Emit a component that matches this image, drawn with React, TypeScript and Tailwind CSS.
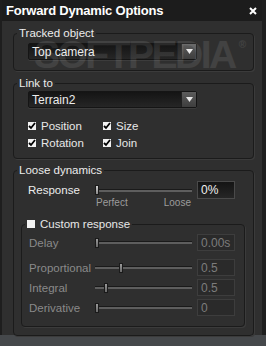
import React from "react";

const font = { fontFamily: '"Liberation Sans", Arial, sans-serif' };

function Dropdown({ value }: { value: string }) {
  return (
    <div className="flex h-[17px] w-[169px] items-stretch rounded-[2px] border border-[#151515] bg-gradient-to-b from-[#141414] to-[#262626] shadow-[0_1px_0_#3c3c3c]">
      <div className="flex flex-1 items-center pl-[3px] text-[12px] leading-none text-[#ececec]">{value}</div>
      <div className="flex w-[15px] items-center justify-center border-l border-[#202020] bg-gradient-to-b from-[#5c5c5c] to-[#3e3e3e]">
        <svg width="7" height="5" viewBox="0 0 7 5"><path d="M0 0h7L3.5 5z" fill="#e8e8e8" /></svg>
      </div>
    </div>
  );
}

function Check({ label, checked = true }: { label: string; checked?: boolean }) {
  return (
    <div className="flex items-center">
      <div className="flex h-[8px] w-[8px] items-center justify-center bg-[#f2f2f2]">
        {checked && (
          <svg width="8" height="8" viewBox="0 0 8 8">
            <path d="M1 4l2 2 4-5" stroke="#000" strokeWidth="1.8" fill="none" />
          </svg>
        )}
      </div>
      <span className="ml-[5px] text-[11.5px] leading-[12px] text-[#e8e8e8]">{label}</span>
    </div>
  );
}

function Slider({ pos, disabled = false }: { pos: number; disabled?: boolean }) {
  return (
    <div className="relative flex h-[12px] w-[97px] items-center">
      <div className="h-[3px] w-full border-t border-[#1a1a1a] bg-[#5e5e5e]" />
      <div
        className={`absolute top-[1px] h-[10px] w-[4px] border border-[#1a1a1a] ${disabled ? "bg-gradient-to-b from-[#9a9a9a] to-[#6a6a6a]" : "bg-gradient-to-b from-[#d0d0d0] to-[#8a8a8a]"}`}
        style={{ left: pos }}
      />
    </div>
  );
}

function ValueBox({ value, disabled = false }: { value: string; disabled?: boolean }) {
  return (
    <div
      className={`flex w-[38px] items-center pl-[3px] text-[12px] leading-none ${
        disabled
          ? "h-[17px] border border-[#3d3d3d] bg-[#2a2a2a] text-[#7c7c7c]"
          : "h-[18px] border border-[#4a4a4a] bg-gradient-to-b from-[#141414] to-[#262626] text-[#f0f0f0]"
      }`}
    >
      {value}
    </div>
  );
}

function Row({ label, pos, value, className = "" }: { label: string; pos: number; value: string; className?: string }) {
  return (
    <div className={`flex items-center ${className}`}>
      <span className="w-[66px] text-[11.5px] leading-[12px] text-[#8a8a8a]">{label}</span>
      <Slider pos={pos} disabled />
      <div className="ml-[5px]">
        <ValueBox value={value} disabled />
      </div>
    </div>
  );
}

const fs = "rounded-[4px] border border-[#1b1b1b] shadow-[1px_1px_0_#3b3b3b]";
const lg = "ml-[3px] px-[2px] text-[11.5px] leading-[13px] text-[#ececec]";

export default function App() {
  return (
    <div className="relative h-[346px] w-[266px] overflow-hidden bg-[#45484b]" style={font}>
      <div className="flex h-[335px] flex-col border-r-[4px] border-l-[2px] border-[#1e1e1e] bg-[#2f2f2f]">
        <div className="flex h-[21px] shrink-0 items-center justify-between bg-[#1c1c1c] pl-[4px] pr-[5px]">
          <span className="text-[13px] font-bold leading-none tracking-[-0.2px] text-white">Forward Dynamic Options</span>
          <svg width="8" height="8" viewBox="0 0 8 8">
            <path d="M1 1l6 6M7 1L1 7" stroke="#fff" strokeWidth="2" />
          </svg>
        </div>

        <div className="flex flex-col pl-[11px] pr-[8px] pt-[6px]">
          <fieldset className={fs}>
            <legend className={lg}>Tracked object</legend>
            <div className="pb-[10px] pl-[14px] pt-[3px]">
              <Dropdown value="Top camera" />
            </div>
          </fieldset>

          <fieldset className={`mt-[6px] ${fs}`}>
            <legend className={lg}>Link to</legend>
            <div className="pb-[9px] pl-[14px] pt-[1px]">
              <Dropdown value="Terrain2" />
              <div className="mt-[12px] grid grid-cols-[75px_auto] gap-y-[5px]">
                <Check label="Position" />
                <Check label="Size" />
                <Check label="Rotation" />
                <Check label="Join" />
              </div>
            </div>
          </fieldset>

          <fieldset className={`mt-[5px] ${fs}`}>
            <legend className={lg}>Loose dynamics</legend>
            <div className="pb-[8px] pl-[7px] pr-[8px] pt-[4px]">
              <div className="flex items-center pl-[7px]">
                <span className="w-[67px] text-[11.5px] leading-[12px] text-[#ececec]">Response</span>
                <Slider pos={0} />
                <div className="ml-[5px]">
                  <ValueBox value="0%" />
                </div>
              </div>
              <div className="-mt-[2px] flex w-[170px] justify-between pl-[75px] text-[10px] leading-[12px] text-[#9c9c9c]">
                <span>Perfect</span>
                <span>Loose</span>
              </div>
              <fieldset className={`mt-[9px] ${fs}`}>
                <legend className="ml-[3px] px-[2px] leading-[13px]">
                  <Check label="Custom response" checked={false} />
                </legend>
                <div className="pb-[10px] pl-[7px] pt-[4px]">
                  <Row label="Delay" pos={0} value="0.00s" />
                  <Row label="Proportional" pos={24} value="0.5" className="mt-[8px]" />
                  <Row label="Integral" pos={9} value="0.5" className="mt-[3px]" />
                  <Row label="Derivative" pos={0} value="0" className="mt-[3px]" />
                </div>
              </fieldset>
            </div>
          </fieldset>
        </div>
      </div>

      <div className="pointer-events-none absolute left-[34px] top-[35px] flex items-start text-[39px] font-bold leading-none tracking-[-2.5px] text-white opacity-[0.09]">
        SOFTPEDIA<span className="ml-[4px] mt-[5px] text-[10px] tracking-normal">®</span>
      </div>
    </div>
  );
}
